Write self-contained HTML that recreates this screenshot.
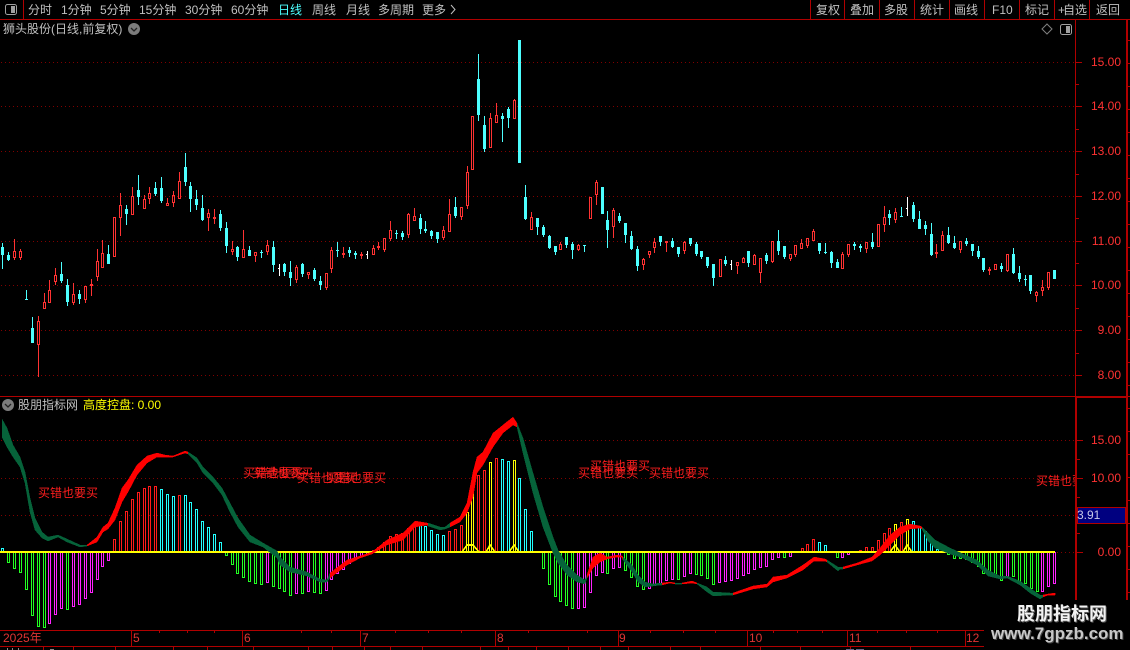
<!DOCTYPE html>
<html><head><meta charset="utf-8"><style>
html,body{margin:0;padding:0;background:#000;width:1130px;height:650px;overflow:hidden}
body{position:relative;font-family:"Liberation Sans","WenQuanYi Zen Hei","Noto Sans CJK SC",sans-serif;font-size:12px}
.t{position:absolute;line-height:14px;white-space:nowrap;color:#c0c0c0}
.a{color:#ff3232;text-align:right;right:9px;width:50px}
.m{color:#ff1e1e}
.d{color:#e03434}
svg{position:absolute;left:0;top:0}
#wm{position:absolute;left:984px;top:600px;width:146px;height:50px;background:#000}
</style></head><body>
<svg id="s" width="1130" height="650" shape-rendering="crispEdges"></svg>

<div class="t" style="left:28px;top:3px">分时</div>
<div class="t" style="left:61px;top:3px">1分钟</div>
<div class="t" style="left:100px;top:3px">5分钟</div>
<div class="t" style="left:139px;top:3px">15分钟</div>
<div class="t" style="left:185px;top:3px">30分钟</div>
<div class="t" style="left:231px;top:3px">60分钟</div>
<div class="t" style="left:278px;top:3px;color:#4dffff">日线</div>
<div class="t" style="left:312px;top:3px">周线</div>
<div class="t" style="left:346px;top:3px">月线</div>
<div class="t" style="left:378px;top:3px">多周期</div>
<div class="t" style="left:422px;top:3px">更多</div>
<div class="t" style="left:816px;top:3px">复权</div>
<div class="t" style="left:850px;top:3px">叠加</div>
<div class="t" style="left:884px;top:3px">多股</div>
<div class="t" style="left:920px;top:3px">统计</div>
<div class="t" style="left:954px;top:3px">画线</div>
<div class="t" style="left:992px;top:3px">F10</div>
<div class="t" style="left:1025px;top:3px">标记</div>
<div class="t" style="left:1058px;top:3px"><span style="letter-spacing:-2px">+</span>自选</div>
<div class="t" style="left:1096px;top:3px">返回</div>

<div class="t" style="left:3px;top:22px">狮头股份(日线,前复权)</div>

<div class="t a" style="top:55px">15.00</div>
<div class="t a" style="top:99px">14.00</div>
<div class="t a" style="top:144px">13.00</div>
<div class="t a" style="top:189px">12.00</div>
<div class="t a" style="top:234px">11.00</div>
<div class="t a" style="top:278px">10.00</div>
<div class="t a" style="top:323px">9.00</div>
<div class="t a" style="top:368px">8.00</div>

<div class="t" style="left:18px;top:398px">股朋指标网</div>
<div class="t" style="left:83px;top:398px;color:#ffff00">高度控盘: 0.00</div>

<div class="t m" style="left:38px;top:486px">买错也要买</div>
<div class="t m" style="left:243px;top:466px">买错也要买</div>
<div class="t m" style="left:253px;top:466px">买错也要买</div>
<div class="t m" style="left:297px;top:471px">买错也要买</div>
<div class="t m" style="left:326px;top:471px">买错也要买</div>
<div class="t m" style="left:578px;top:466px">买错也要买</div>
<div class="t m" style="left:590px;top:459px">买错也要买</div>
<div class="t m" style="left:649px;top:466px">买错也要买</div>
<div class="t m" style="left:1036px;top:474px;width:39px;overflow:hidden">买错也要买</div>

<div class="t a" style="top:433px">15.00</div>
<div class="t a" style="top:471px">10.00</div>
<div class="t a" style="top:545px">0.00</div>
<div class="t" style="left:1077px;top:508px;color:#c8c8e8">3.91</div>

<div class="t d" style="left:3px;top:631px">2025年</div>
<div class="t d" style="left:133px;top:631px">5</div>
<div class="t d" style="left:244px;top:631px">6</div>
<div class="t d" style="left:362px;top:631px">7</div>
<div class="t d" style="left:497px;top:631px">8</div>
<div class="t d" style="left:619px;top:631px">9</div>
<div class="t d" style="left:749px;top:631px">10</div>
<div class="t d" style="left:849px;top:631px">11</div>
<div class="t d" style="left:966px;top:631px">12</div>

<div id="wm"></div>
<div class="t" style="left:1017px;top:604px;line-height:20px;font-size:18px;font-weight:bold;color:#f2f2f2;text-shadow:1px 1px 0 #555">股朋指标网</div>
<div class="t" style="left:991px;top:624px;line-height:20px;font-size:17px;font-weight:bold;color:#c8c8c8;text-shadow:1px 1px 0 #444">www.7gpzb.com</div>

<script>
var C='#4dffff',R='#ff3232',W='#ffffff',LN='#b00000',DOT='#800000';
var o=[];
function rc(x,y,w,h,f){o.push('<rect x="'+x+'" y="'+y+'" width="'+w+'" height="'+h+'" fill="'+f+'"/>');}
function box(x,y,w,h,s,f){o.push('<rect x="'+(x+.5)+'" y="'+(y+.5)+'" width="'+w+'" height="'+h+'" fill="'+(f||'none')+'" stroke="'+s+'"/>');}

/* grid: single-pixel dots every 4px */
function dots(y,x2){var d='';for(var x=1;x<x2;x+=4){d+='M'+x+' '+y+'h1v1h-1z';}o.push('<path d="'+d+'" fill="'+DOT+'"/>');}
[62,106,151,196,241,285,330,375].forEach(function(y){dots(y,1075);rc(1076,y,6,1,LN);});
[440,478,515,552].forEach(function(y){dots(y,1075);rc(1077,y,6,1,LN);});
[84,129,174,218,263,308,353].forEach(function(y){rc(1076,y,3,1,LN);});
[459,497,533].forEach(function(y){rc(1077,y,3,1,LN);});
for(var y=40;y<600;y+=23){rc(1128,y,2,1,LN);}

/* frame */
rc(0,19,1130,1,LN);
rc(23,0,1,19,LN);
[810,844,879,914,949,984,1019,1054,1089].forEach(function(x){rc(x,0,1,19,LN);});
rc(1075,20,1,376,LN);
rc(1075,396,2,204,LN);
rc(1126,20,2,580,LN);
rc(0,396,1130,1,LN);rc(1077,397,49,1,LN);
rc(0,630,1075,1,LN);rc(0,646,984,1,LN);
[131,242,360,495,618,747,847,965].forEach(function(x){rc(x,631,1,15,LN);});
[159,187,214,301,331,395,428,461,528,587,650,683,715,773,797,822,877,906,937].forEach(function(x){rc(x,631,1,2,LN);});
[43,73,115,173,207,253,308,332,364,390,422,480,508,536,568,600,628,670,700,760,800,850,910].forEach(function(x){rc(x,647,1,3,LN);});
rc(7,648,1,2,'#888');rc(12,648,1,2,'#888');rc(18,648,1,2,'#888');rc(50,649,4,1,'#888');
rc(846,649,8,1,'#668');rc(856,649,8,1,'#668');

/* navy */
box(1077,507,48,16,LN,'#000080');

/* candles */
var K=[
[2,'c',243,247,255,269],[8,'c',252,255,260,261],[14,'r',239,251,258,260],[20,'r',249,251,258,260],[26,'c',290,299,300,300],
[32,'c',317,328,343,343],[38,'r',316,321,345,377],[44,'r',293,302,309,309],[49,'r',280,290,303,303],[55,'r',268,275,282,285],
[61,'c',262,274,281,283],[67,'c',279,285,302,306],[73,'r',283,294,303,305],[79,'c',290,294,299,304],[85,'r',286,286,300,303],
[91,'r',279,284,286,296],[97,'r',249,261,277,281],[102,'r',240,253,268,268],[108,'c',245,254,264,264],[114,'r',217,217,257,257],
[120,'r',193,205,218,236],[126,'c',205,209,214,225],[132,'r',187,196,215,215],[138,'c',175,190,197,205],[144,'r',195,199,209,209],
[149,'r',187,193,199,204],[155,'c',182,188,194,196],[161,'c',177,188,201,203],[167,'r',198,203,206,206],[173,'r',191,195,203,207],
[179,'r',172,181,199,199],[185,'c',153,167,182,186],[190,'c',182,186,199,212],[196,'c',190,199,205,210],[202,'c',195,208,220,221],
[208,'r',209,213,218,231],[214,'r',209,217,219,224],[220,'c',210,214,228,231],[226,'c',222,228,246,253],[232,'r',241,249,252,255],
[237,'c',246,247,257,261],[243,'r',230,249,258,258],[249,'c',246,250,256,256],[255,'r',252,252,256,262],[261,'c',250,252,253,258],
[267,'r',240,245,252,255],[273,'c',241,247,265,272],[279,'w',264,268,269,276],[284,'c',263,264,272,276],[290,'c',261,272,278,286],
[296,'r',265,267,280,283],[302,'c',263,264,274,277],[308,'r',272,272,275,279],[314,'c',268,270,279,281],[320,'c',276,281,285,290],
[326,'r',273,273,288,290],[331,'r',247,250,269,273],[337,'c',242,250,251,257],[343,'r',247,253,255,258],[349,'c',247,250,253,257],
[355,'c',251,253,255,259],[361,'r',252,254,254,259],[367,'w',251,254,255,259],[373,'r',245,248,255,255],[378,'r',242,246,248,250],
[384,'r',238,238,250,252],[390,'r',221,230,239,241],[396,'c',230,233,234,239],[402,'c',231,233,237,240],[408,'r',213,214,235,238],
[414,'r',208,216,221,221],[420,'c',214,218,229,234],[425,'c',221,229,231,233],[431,'c',230,231,236,239],[437,'c',232,232,239,243],
[443,'r',226,230,238,240],[449,'r',199,214,232,232],[455,'c',197,207,216,218],[461,'r',207,207,217,220],[467,'r',166,172,206,209],
[472,'r',116,116,170,170],[478,'c',54,79,115,121],[484,'c',116,125,149,152],[490,'r',113,118,148,148],[496,'r',103,115,123,123],
[502,'c',113,116,119,142],[508,'c',107,109,118,128],[514,'r',99,100,119,119],[519,'c',40,40,163,163],[525,'c',185,197,219,220],
[531,'r',212,217,230,230],[537,'c',218,218,227,235],[543,'c',225,227,235,237],[549,'c',235,236,248,249],[555,'c',246,246,252,255],
[560,'r',242,244,250,250],[566,'c',237,237,245,248],[572,'c',242,244,250,259],[578,'r',244,245,250,251],[584,'c',245,245,246,252],
[590,'r',197,197,219,219],[596,'r',180,182,195,205],[602,'c',187,187,214,214],[607,'c',211,220,230,248],[613,'r',208,210,227,238],
[619,'c',213,216,221,223],[625,'c',223,223,235,243],[631,'c',231,236,249,250],[637,'c',246,249,266,271],[643,'r',258,259,265,270],
[649,'r',251,251,255,258],[654,'r',238,242,248,253],[660,'c',236,236,242,246],[666,'r',241,241,243,252],[672,'c',238,241,247,248],
[678,'c',247,247,254,257],[684,'r',241,242,251,254],[690,'c',238,238,244,246],[696,'c',242,244,254,256],[701,'c',251,251,257,259],
[707,'c',257,257,266,268],[713,'c',264,264,278,286],[720,'r',259,259,277,277],[725,'c',256,260,264,266],[731,'w',260,264,265,270],
[737,'r',262,262,266,274],[743,'r',257,258,263,263],[748,'c',251,251,263,267],[754,'r',254,255,265,265],[760,'r',258,258,273,283],
[766,'c',253,255,261,264],[772,'r',241,241,262,263],[778,'c',230,241,251,255],[784,'c',246,246,257,259],[790,'r',254,254,259,261],
[795,'r',245,245,255,257],[801,'r',239,243,249,249],[807,'r',238,238,246,248],[813,'r',229,231,241,241],[819,'c',243,243,251,254],
[825,'c',243,252,253,254],[831,'c',251,252,263,268],[837,'c',259,262,268,268],[842,'r',252,254,269,269],[848,'r',244,244,255,257],
[854,'c',242,244,246,250],[860,'c',244,246,248,252],[866,'r',242,242,249,253],[872,'c',233,242,247,249],[878,'r',224,224,247,247],
[884,'r',206,217,225,232],[889,'c',210,214,218,225],[895,'r',208,212,220,223],[901,'c',207,216,217,217],[907,'w',197,208,209,216],
[913,'c',202,205,219,222],[919,'c',211,219,229,229],[925,'c',221,225,229,235],[931,'c',223,234,255,256],[936,'r',244,252,254,258],
[942,'r',231,235,251,251],[948,'c',227,235,243,244],[954,'c',236,243,248,249],[960,'r',241,241,250,253],[966,'c',238,241,244,246],
[972,'c',244,244,251,256],[978,'c',246,251,257,259],[983,'c',258,258,270,272],[989,'r',267,269,271,275],[995,'r',264,264,270,270],
[1001,'c',263,266,269,272],[1007,'r',254,254,271,272],[1013,'c',248,254,273,274],[1019,'c',266,273,279,282],[1025,'c',275,279,280,286],
[1030,'c',275,275,291,294],[1036,'r',291,292,296,302],[1042,'r',280,287,291,296],[1048,'r',272,272,288,290],[1054,'c',270,270,279,279]];
K.forEach(function(k){
 var x=k[0],t=k[1],c=t=='c'?C:t=='r'?R:W;
 if(k[3]>k[2])rc(x,k[2],1,k[3]-k[2],c);
 if(k[5]>k[4])rc(x,k[4],1,k[5]-k[4],c);
 if(t=='w'){rc(x-1,k[3],2,1,c);rc(x,k[3],1,k[4]-k[3]+1,c);return;}
 if(t=='c'){if(k[4]-k[3]<=1)rc(x-1,k[3],3,1,c);else rc(x-1,k[3],3,k[4]-k[3],c);}
 else{if(k[4]-k[3]<=1)rc(x-1,k[3],3,2,c);else box(x-1,k[3],2,k[4]-k[3]-1,c);}
});

/* histogram */
var G='#22ff22',M='#ff22ff',H='#ff1a1a',Y='#ffff00',Q='#22ffff';
var B=[[2,548,Q],[8,562,G],[14,568,G],[20,572,G],[26,589,G],[32,615,G],[38,626,G],[44,627,G],[49,623,M],[55,614,M],[61,608,M],[67,609,G],[73,606,M],[79,604,M],[85,598,M],[91,592,M],[97,579,M],[102,566,M],[108,560,M],
[114,539,H],[120,521,H],[126,511,H],[132,499,H],[138,492,H],[144,488,H],[149,486,H],[155,486,H],[161,489,Q],[167,494,Q],[173,496,Q],[179,495,H],[185,495,Q],[190,502,Q],[196,509,Q],[202,521,Q],[208,527,Q],[214,534,Q],[220,542,Q],
[226,555,G],[232,564,G],[237,573,G],[243,577,G],[249,581,G],[255,583,G],[261,584,G],[267,582,M],[273,586,G],[279,588,G],[284,591,G],[290,595,G],[296,593,M],[302,593,G],[308,591,M],[314,592,G],[320,593,G],[326,590,M],[331,579,M],[337,573,M],[343,569,M],[349,563,M],[355,559,M],[361,556,M],[367,554,M],
[373,550,H],[378,547,H],[384,542,H],[390,536,H],[396,534,H],[402,533,H],[408,528,H],[414,525,H],[420,524,Q],[425,526,Q],[431,530,Q],[437,534,Q],[443,535,Q],[449,531,H],[455,529,H],[461,525,H],[467,512,Y],[472,492,Y],[478,475,H],[484,470,H],[490,462,Y],[496,458,H],[502,459,Q],[508,461,Q],[514,460,Y],[519,478,Q],[525,509,Q],[531,531,Q],
[543,568,G],[549,584,G],[555,596,G],[560,601,G],[566,605,G],[572,608,G],[578,608,M],[584,607,M],[590,592,M],[596,575,M],[602,572,M],[607,573,G],[613,568,M],[619,567,M],[625,570,G],[631,577,G],[637,586,G],[643,589,G],[649,588,M],[654,585,M],[660,583,M],[666,580,M],[672,579,M],[678,579,G],[684,576,M],[690,573,M],[696,574,G],[701,575,G],[707,578,G],[713,584,G],[719,582,M],[725,581,M],[731,580,M],[737,578,M],[743,575,M],[748,573,M],[754,569,M],[760,567,M],[766,566,M],[772,559,M],[778,557,M],[784,557,G],[790,556,M],
[802,548,H],[807,544,H],[813,539,H],[819,542,Q],[825,545,Q],[837,557,G],[842,557,M],[848,554,M],[860,550,H],[866,547,H],[872,547,H],[878,540,H],[884,533,H],[889,528,H],[895,524,Y],[901,522,H],[907,519,Y],[913,521,Q],[919,526,Q],[925,531,Q],[931,542,Q],[937,549,Q],
[948,554,G],[954,558,G],[960,558,G],[966,559,G],[972,562,G],[978,566,G],[983,573,G],[989,572,G],[995,576,G],[1001,580,G],[1007,576,M],[1013,576,G],[1019,581,G],[1025,583,G],[1031,588,G],[1037,591,G],[1042,591,M],[1048,586,M],[1054,583,M]];
B.forEach(function(b){var y1=Math.min(552,b[1]),y2=Math.max(552,b[1]);box(b[0]-1,y1,2,y2-y1,b[2]);});

/* zero line + spikes */
rc(0,551,1055,2,Y);
o.push('<g shape-rendering="crispEdges" fill="none" stroke="#ffff00" stroke-width="1.6">');
['462,552 467,545 473,545 479,552','486,552 490,545 495,552','509,552 514,545 519,552','890,552 895,545 900,552','903,552 907,545 912,552'].forEach(function(p){o.push('<polyline points="'+p+'"/>');});
o.push('</g>');

/* ribbon */
var DG='#06633a',RD='#ff0000';
var S=[
[DG,[[2,419,437],[7,428,447],[13,445,457],[20,457,467],[25,472,483],[30,498,512],[35,518,530],[42,532,538],[48,537,541],[58,535,537],[67,539,542],[80,545,547]]],
[RD,[[87,545,546],[97,537,542],[103,527,532],[108,523,529],[115,508,520],[122,488,502],[128,480,492],[137,465,475],[147,456,463],[157,453,457],[165,455,457],[173,456,457],[185,451,453]]],
[DG,[[188,452,454],[197,458,463],[203,467,473],[213,477,483],[222,488,495],[230,503,512],[238,518,527],[250,535,542],[263,543,547],[277,551,558],[280,557,565],[290,567,572],[307,572,576],[320,579,582],[327,580,582]]],
[RD,[[330,573,578],[347,560,565],[360,556,558],[372,552,554],[387,540,545],[403,533,540],[415,521,527],[427,523,525]]],
[DG,[[428,523,526],[440,527,530],[445,527,529]]],
[RD,[[450,523,527],[460,517,522],[467,503,513],[473,472,497],[477,457,473],[483,452,465],[493,433,447],[503,425,433],[513,417,425]]],
[DG,[[517,423,427],[523,438,453],[533,473,493],[543,507,527],[553,537,553],[558,550,563],[567,565,575],[577,575,582],[585,580,584]]],
[RD,[[587,575,578],[593,557,568],[600,553,562],[607,557,559],[617,555,557],[622,556,557]]],
[DG,[[623,557,560],[632,565,572],[638,575,582],[645,582,587],[653,584,586],[660,583,585]]],
[RD,[[662,583,585],[670,582,583]]],
[DG,[[675,583,584]]],
[RD,[[682,583,584],[692,581,583]]],
[DG,[[697,583,584],[707,587,592],[713,592,596],[730,593,595]]],
[RD,[[733,593,595],[753,586,589],[767,584,587],[773,577,582],[787,575,578],[803,565,570],[814,557,561],[825,559,561]]],
[DG,[[827,560,562],[838,567,571],[840,567,569]]],
[RD,[[843,567,569],[857,563,565],[872,557,561],[880,548,555],[890,535,545],[900,527,535],[910,524,529],[920,526,528]]],
[DG,[[922,527,529],[928,533,541],[935,540,548],[950,548,554],[963,554,558],[977,560,565],[988,570,576],[1000,576,579],[1007,576,578],[1020,581,585],[1030,588,593],[1040,595,599]]],
[RD,[[1043,595,597],[1048,594,595],[1055,593,595]]]];
S.forEach(function(s,i){
 var p=s[1].slice();
 if(S[i+1])p.push(S[i+1][1][0]);
 var top=p.map(function(a){return a[0]+','+a[1];}).join(' ');
 var bot=p.slice().reverse().map(function(a){return a[0]+','+a[2];}).join(' ');
 o.push('<polygon points="'+top+' '+bot+'" fill="'+s[0]+'" stroke="'+s[0]+'" stroke-width="0.4"/>');
});

/* icons */
o.push('<g shape-rendering="auto">');
o.push('<rect x="5.5" y="4.5" width="11" height="10" rx="2" fill="none" stroke="#a0a0a0"/><rect x="11" y="6" width="4" height="7" fill="#a0a0a0"/>');
o.push('<path d="M451 5l4 4.5-4 4.5" fill="none" stroke="#c0c0c0"/>');
[[134,29],[8,405]].forEach(function(c){
 o.push('<circle cx="'+c[0]+'" cy="'+c[1]+'" r="6" fill="#7c7c7c"/><path d="M'+(c[0]-3)+' '+(c[1]-1)+'l3 3 3-3" fill="none" stroke="#222" stroke-width="1.3"/>');
});
o.push('<path d="M1047 24l5 5-5 5-5-5z" fill="none" stroke="#808080"/>');
o.push('<rect x="1060.5" y="24.5" width="11" height="10" rx="2" fill="none" stroke="#a0a0a0"/><rect x="1066" y="26" width="4" height="7" fill="#a0a0a0"/>');
o.push('</g>');
document.getElementById('s').innerHTML=o.join('');
</script>
</body></html>
